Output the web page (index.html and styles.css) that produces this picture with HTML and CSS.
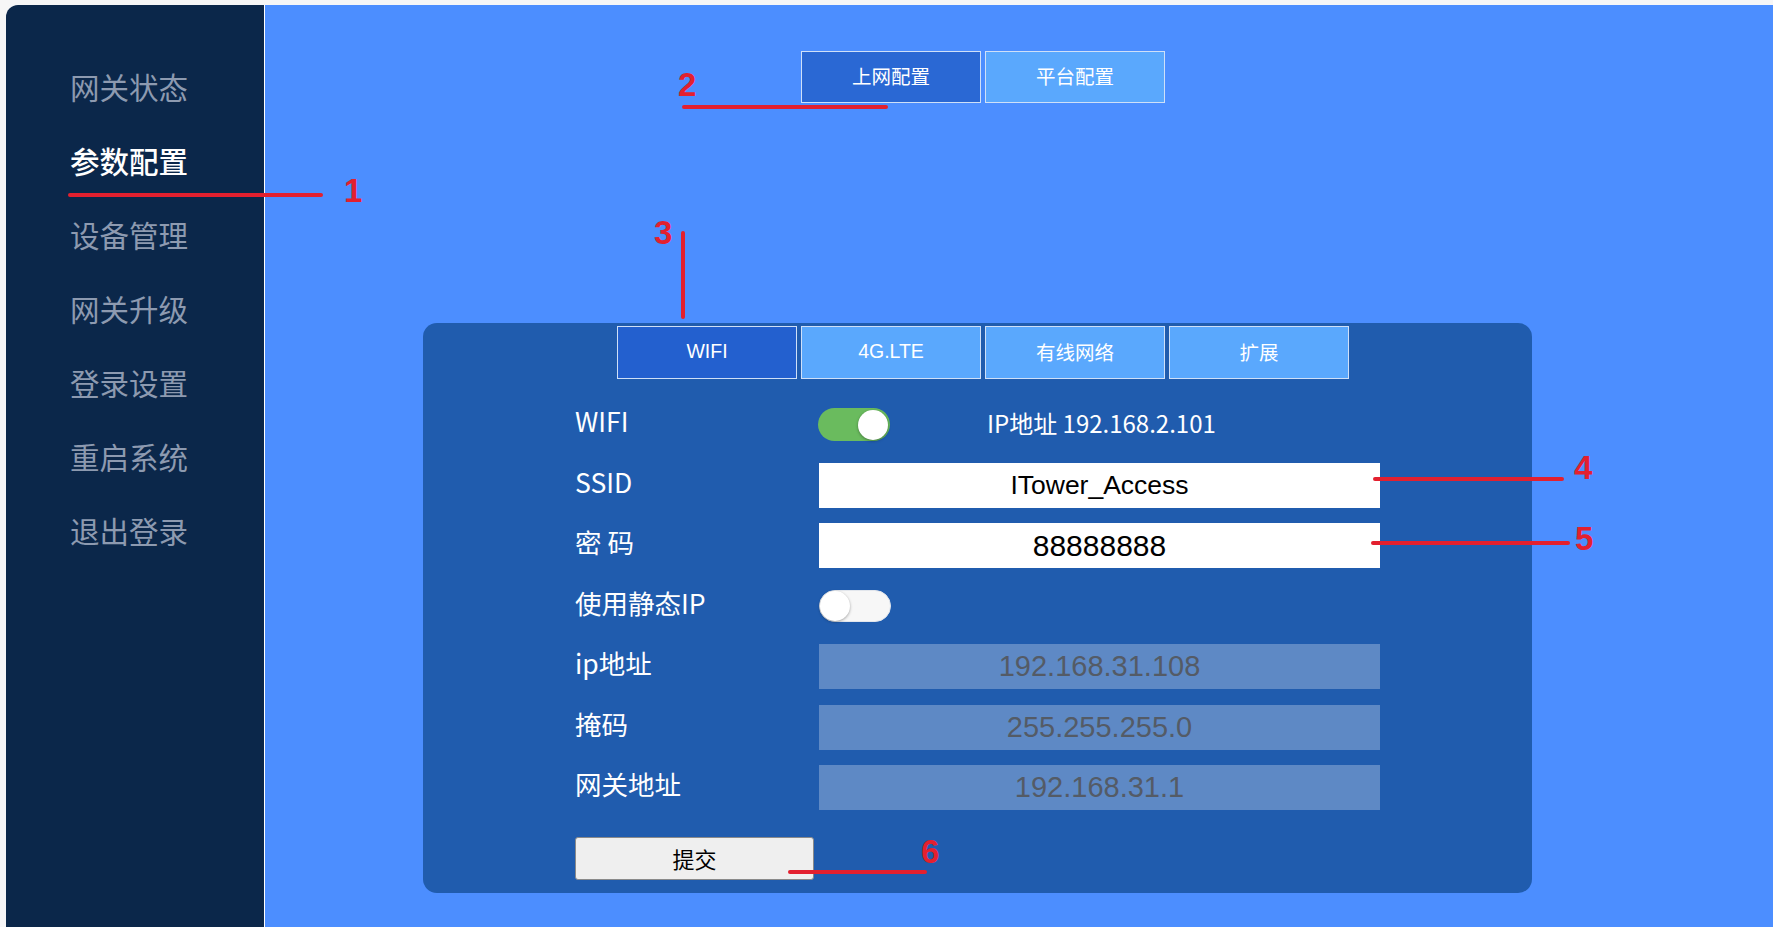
FILE: index.html
```html
<!DOCTYPE html>
<html lang="zh-CN">
<head>
<meta charset="utf-8">
<title>参数配置</title>
<link rel="stylesheet" href="styles.css">
</head>
<body>
<div class="app">
  <aside class="sidebar">
    <ul class="menu">
      <li class="menu-item">网关状态</li>
      <li class="menu-item active">参数配置</li>
      <li class="menu-item">设备管理</li>
      <li class="menu-item">网关升级</li>
      <li class="menu-item">登录设置</li>
      <li class="menu-item">重启系统</li>
      <li class="menu-item">退出登录</li>
    </ul>
  </aside>
  <main class="main">
    <div class="top-tabs">
      <div class="tab tab-active-top">上网配置</div>
      <div class="tab">平台配置</div>
    </div>
    <section class="panel">
      <div class="panel-tabs">
        <div class="tab tab-active">WIFI</div>
        <div class="tab">4G.LTE</div>
        <div class="tab">有线网络</div>
        <div class="tab">扩展</div>
      </div>
      <div class="form">
        <div class="label">WIFI</div>
        <div class="control wifi-control">
          <span class="toggle on"><span class="knob"></span></span>
          <span class="ip-text">IP地址 192.168.2.101</span>
        </div>
        <div class="label">SSID</div>
        <div class="control"><div class="input ssid">ITower_Access</div></div>
        <div class="label">密 码</div>
        <div class="control"><div class="input pwd">88888888</div></div>
        <div class="label">使用静态IP</div>
        <div class="control"><span class="toggle off"><span class="knob"></span></span></div>
        <div class="label">ip地址</div>
        <div class="control"><div class="input disabled">192.168.31.108</div></div>
        <div class="label">掩码</div>
        <div class="control"><div class="input disabled">255.255.255.0</div></div>
        <div class="label">网关地址</div>
        <div class="control"><div class="input disabled">192.168.31.1</div></div>
      </div>
      <button class="submit">提交</button>
    </section>
  </main>
</div>
<div class="notes">
  <div class="line h l1"></div><div class="num n1">1</div>
  <div class="line h l2"></div><div class="num n2">2</div>
  <div class="line v l3"></div><div class="num n3">3</div>
  <div class="line h l4"></div><div class="num n4">4</div>
  <div class="line h l5"></div><div class="num n5">5</div>
  <div class="line h l6"></div><div class="num n6">6</div>
</div>
</body>
</html>
```
FILE: styles.css
```css
* { box-sizing: border-box; }
html, body { margin: 0; padding: 0; }
body {
  background: #f6f6f7;
  font-family: "Noto Sans CJK SC", "Noto Sans", sans-serif;
  position: relative;
  width: 1773px;
  height: 927px;
  overflow: hidden;
}
.app {
  display: flex;
  height: 927px;
  padding: 5px 0 0 6px;
}
.sidebar {
  width: 259px;
  flex: none;
  background: #0b274a;
  border-top-left-radius: 12px;
  border-right: 1px solid #ffffff;
}
.menu {
  list-style: none;
  margin: 0;
  padding: 44px 0 0 64px;
}
.menu-item {
  font-size: 29.5px;
  line-height: 74px;
  height: 74px;
  color: #8d9ab0;
  white-space: nowrap;
}
.menu-item.active {
  color: #ffffff;
  font-weight: 500;
}
.main {
  flex: 1;
  background: #4c8eff;
  display: flex;
  flex-direction: column;
}
.top-tabs {
  display: flex;
  gap: 4px;
  margin-top: 46px;
  padding-left: 536px;
}
.tab {
  width: 180px;
  height: 52px;
  border: 1px solid #cfe0f8;
  background: #5aa8fd;
  color: #ffffff;
  font-family: "Liberation Sans", "Noto Sans CJK SC", sans-serif;
  font-size: 19.5px;
  display: flex;
  align-items: center;
  justify-content: center;
  padding-bottom: 3px;
}
.tab-active-top { background: #2a68d4; }
.tab-active { background: #2360cf; }
.panel {
  margin-top: 220px;
  margin-left: 158px;
  width: 1109px;
  height: 570px;
  background: #205cae;
  border-radius: 14px;
  padding: 3px 0 0 0;
}
.panel-tabs {
  display: flex;
  gap: 4px;
  padding-left: 194px;
}
.panel-tabs .tab { height: 53px; }
.form {
  display: grid;
  grid-template-columns: 244px 561px;
  grid-auto-rows: 45px;
  row-gap: 15.5px;
  margin-top: 23px;
  padding-left: 152px;
}
.label {
  color: #ffffff;
  font-size: 26.5px;
  display: flex;
  align-items: center;
  white-space: pre;
  padding-bottom: 8px;
}
.control {
  display: flex;
  align-items: center;
}
.wifi-control { gap: 97px; }
.ip-text {
  color: #ffffff;
  font-size: 24px;
  white-space: nowrap;
  padding-bottom: 4px;
}
.toggle {
  width: 72px;
  height: 33px;
  border-radius: 17px;
  display: flex;
  align-items: center;
  padding: 0 2px;
  flex: none;
}
.toggle.on {
  background: #6abb5e;
  justify-content: flex-end;
  margin-left: -1px;
}
.toggle.off {
  background: #f7f7f7;
  border: 1px solid #e2e6ec;
  justify-content: flex-start;
  padding: 0;
  height: 32px;
}
.knob {
  width: 30px;
  height: 30px;
  border-radius: 50%;
  background: #ffffff;
  box-shadow: 0 1px 3px rgba(0, 0, 0, 0.35);
}
.input {
  width: 561px;
  height: 45px;
  display: flex;
  align-items: center;
  justify-content: center;
  font-family: "Liberation Sans", Arial, sans-serif;
  background: #ffffff;
  color: #000000;
}
.input.ssid { font-size: 26.5px; }
.input.pwd { font-size: 30px; }
.input.disabled {
  background: #5e89c5;
  color: #545b66;
  font-size: 29px;
}
.submit {
  display: block;
  margin: 27px 0 0 152px;
  width: 239px;
  height: 43px;
  background: #efefef;
  border: 1px solid #8a8a8a;
  border-radius: 3px;
  font-family: "Noto Sans CJK SC", sans-serif;
  font-size: 22px;
  color: #000000;
  padding: 0 0 2px 0;
}

/* annotation overlay */
.notes {
  position: absolute;
  left: 0;
  top: 0;
  width: 1773px;
  height: 927px;
  pointer-events: none;
}
.line {
  position: absolute;
  background: #e3202f;
  border-radius: 2px;
}
.line.h { height: 4px; }
.line.v { width: 4px; }
.l1 { left: 68px; top: 193px; width: 255px; }
.l2 { left: 682px; top: 105px; width: 206px; }
.l3 { left: 681px; top: 231px; height: 88px; }
.l4 { left: 1373px; top: 477px; width: 191px; }
.l5 { left: 1371px; top: 541px; width: 199px; }
.l6 { left: 788px; top: 870px; width: 139px; }
.num {
  position: absolute;
  color: #e3202f;
  font-family: "Liberation Sans", Arial, sans-serif;
  font-weight: bold;
  font-size: 33px;
  line-height: 33px;
}
.n1 { left: 344px; top: 174px; }
.n2 { left: 678px; top: 68px; }
.n3 { left: 654px; top: 216px; }
.n4 { left: 1574px; top: 451px; }
.n5 { left: 1575px; top: 522px; }
.n6 { left: 921px; top: 835px; }
```
